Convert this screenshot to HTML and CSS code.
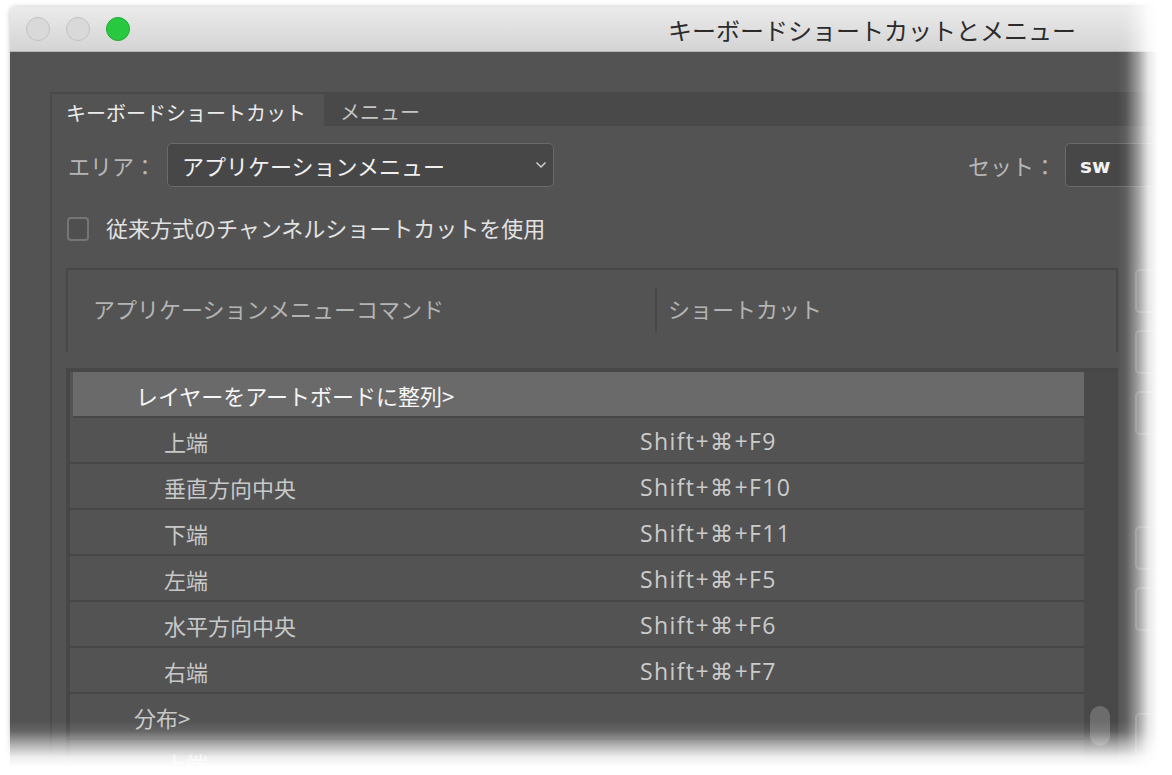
FILE: index.html
```html
<!DOCTYPE html>
<html lang="ja">
<head>
<meta charset="utf-8">
<title>キーボードショートカットとメニュー</title>
<link rel="stylesheet" href="styles.css">
</head>
<body>
<div class="window">
  <div class="titlebar">
    <div class="lights">
      <span class="light gray"></span>
      <span class="light gray"></span>
      <span class="light green"></span>
    </div>
    <div class="title">キーボードショートカットとメニュー</div>
    <div></div>
  </div>
  <div class="winbody">
    <div class="panel">
      <div class="tabs">
        <div class="tab active">キーボードショートカット</div>
        <div class="tab">メニュー</div>
      </div>
      <div class="content">
        <div class="toprow">
          <div class="field">
            <span class="label">エリア：</span>
            <div class="select area">
              <span class="select-text">アプリケーションメニュー</span>
              <svg class="chev" width="12" height="8" viewBox="0 0 12 8"><path d="M1.5 1.5 L6 6 L10.5 1.5" fill="none" stroke="#cfcfcf" stroke-width="1.5"/></svg>
            </div>
          </div>
          <div class="field setfield">
            <span class="label">セット：</span>
            <div class="select set"><span class="sw">sw</span></div>
          </div>
        </div>
        <div class="checkrow">
          <span class="checkbox"></span>
          <span class="checklabel">従来方式のチャンネルショートカットを使用</span>
        </div>
        <div class="tablearea">
          <div class="table">
            <div class="thead">
              <div class="th th1">アプリケーションメニューコマンド</div>
              <div class="thsep"></div>
              <div class="th th2">ショートカット</div>
            </div>
            <div class="list">
              <div class="rows">
                <div class="row parent sel"><span class="name">レイヤーをアートボードに整列&gt;</span><span class="key"></span></div>
                <div class="row"><span class="name">上端</span><span class="key">Shift+⌘+F9</span></div>
                <div class="row"><span class="name">垂直方向中央</span><span class="key">Shift+⌘+F10</span></div>
                <div class="row"><span class="name">下端</span><span class="key">Shift+⌘+F11</span></div>
                <div class="row"><span class="name">左端</span><span class="key">Shift+⌘+F5</span></div>
                <div class="row"><span class="name">水平方向中央</span><span class="key">Shift+⌘+F6</span></div>
                <div class="row"><span class="name">右端</span><span class="key">Shift+⌘+F7</span></div>
                <div class="row parent"><span class="name">分布&gt;</span><span class="key"></span></div>
                <div class="row"><span class="name">上端</span><span class="key"></span></div>
              </div>
              <div class="scrolltrack"><div class="thumb"></div></div>
            </div>
          </div>
          <div class="buttons">
            <div class="btn"></div>
            <div class="btn"></div>
            <div class="btn"></div>
            <div class="btn gap1"></div>
            <div class="btn"></div>
            <div class="btn gap2"></div>
          </div>
        </div>
      </div>
    </div>
  </div>
</div>
<div class="fade-right"></div>
<div class="fade-bottom"></div>
</body>
</html>
```

FILE: styles.css
```css
* { box-sizing: border-box; }
html, body { margin: 0; padding: 0; }
body {
  width: 1172px;
  height: 775px;
  overflow: hidden;
  background: #ffffff;
  position: relative;
  font-family: "Noto Sans CJK JP", "Noto Sans", sans-serif;
}
.window {
  margin: 7px 0 0 10px;
  width: 1724px;
  height: 900px;
  border-radius: 6px 6px 0 0;
  overflow: hidden;
  box-shadow: 0 0 5px rgba(0,0,0,0.25);
}
.titlebar {
  height: 45px;
  border-bottom: 1px solid #b4b4b4;
  background: linear-gradient(#ebebeb, #d4d4d4);
  display: grid;
  grid-template-columns: 1fr auto 1fr;
  align-items: center;
}
.lights {
  display: flex;
  gap: 16px;
  padding-left: 16px;
  padding-bottom: 1px;
}
.light {
  width: 24px;
  height: 24px;
  border-radius: 50%;
  display: block;
}
.light.gray { background: #d9d9d9; border: 1px solid #c2c2c2; }
.light.green { background: #28c940; border: 1px solid #1eaa30; }
.title {
  font-size: 24px;
  line-height: 24px;
  color: #2b2b2b;
  padding-top: 2px;
  white-space: nowrap;
}
.winbody {
  background: #535353;
  height: 900px;
  padding: 40px 0 0 40px;
}
.panel {
  width: 1221px;
  border-left: 2px solid #4a4a4a;
  height: 800px;
}
.tabs {
  display: flex;
  background: #494949;
  height: 34px;
}
.tab {
  font-size: 20px;
  line-height: 24px;
  color: #c4c4c4;
  padding: 8px 16px 0 16px;
  white-space: nowrap;
}
.tab.active {
  margin-top: 2px;
  width: 272px;
  background: #535353;
  color: #ececec;
  padding: 7px 0 0 14px;
}
.content {
  padding: 17px 16px 0 14px;
}
.toprow {
  display: flex;
  align-items: center;
  height: 44px;
}
.field {
  display: flex;
  align-items: center;
}
.setfield { margin-left: auto; }
.label {
  font-size: 22px;
  color: #b6b6b6;
  margin-left: 2px;
  white-space: nowrap;
}
.select {
  height: 44px;
  border: 1px solid #6a6a6a;
  border-radius: 5px;
  background: #474747;
  display: flex;
  align-items: center;
}
.select.area {
  width: 387px;
  margin-left: 11px;
  padding: 0 6px 0 14px;
  justify-content: space-between;
}
.select-text {
  font-size: 22px;
  color: #f0f0f0;
  white-space: nowrap;
}
.select.set {
  width: 190px;
  margin-left: 9px;
  padding-left: 14px;
}
.sw {
  font-family: "DejaVu Sans", "Liberation Sans", sans-serif;
  font-weight: bold;
  font-size: 20px;
  color: #f2f2f2;
  padding-top: 2px;
}
.checkrow {
  margin-top: 30px;
  display: flex;
  align-items: center;
  height: 24px;
}
.checkbox {
  width: 22px;
  height: 24px;
  margin-left: 1px;
  border: 2px solid #757575;
  border-radius: 4px;
  background: #4f4f4f;
}
.checklabel {
  font-size: 22px;
  line-height: 24px;
  color: #e2e2e2;
  margin-left: 17px;
  padding-bottom: 4px;
  white-space: nowrap;
}
.tablearea {
  margin-top: 27px;
  display: flex;
  gap: 17px;
}
.table { width: 1052px; flex: none; }
.thead {
  height: 84px;
  border: 2px solid #474747;
  border-bottom: none;
  display: flex;
  align-items: center;
  padding-bottom: 6px;
}
.th {
  font-size: 22px;
  color: #b4b4b4;
  white-space: nowrap;
}
.th1 { width: 587px; padding-left: 25px; }
.thsep { width: 2px; height: 44px; background: #474747; margin-top: 4px; }
.th2 { padding-left: 11px; }
.list {
  margin-top: 16px;
  border-top: 4px solid #474747;
  border-left: 4px solid #474747;
  border-right: 2px solid #474747;
  display: flex;
  height: 420px;
  background: #535353;
}
.rows { width: 1014px; }
.row {
  height: 46px;
  border-bottom: 2px solid #474747;
  display: grid;
  grid-template-columns: 570px 1fr;
  align-items: center;
  padding-top: 2px;
  font-size: 22px;
  color: #c8c8c8;
  white-space: nowrap;
}
.row .name { padding-left: 94px; }
.row.parent .name { padding-left: 64px; }
.row.sel {
  margin-left: 3px;
  background: #6a6a6a;
  color: #f6f6f6;
  grid-template-columns: 567px 1fr;
}
.row.sel .name { padding-left: 63px; }
.key {
  font-family: "Open Sans", "DejaVu Sans", sans-serif;
  font-size: 23px;
  letter-spacing: 1.4px;
  color: #cbcbcb;
}
.scrolltrack {
  flex: 1;
  background: repeating-conic-gradient(#4b4b4b 0 25%, #464646 0 50%) 0 0 / 2px 2px;
}
.thumb {
  width: 20px;
  height: 40px;
  border-radius: 10px;
  background: #6c6c6c;
  margin: 334px 0 0 6px;
}
.buttons {
  display: flex;
  flex-direction: column;
  gap: 17px;
  padding-top: 1px;
}
.btn {
  width: 130px;
  height: 44px;
  border: 2px solid #6e6e6e;
  border-radius: 5px;
}
.btn.gap1 { margin-top: 74px; }
.btn.gap2 { margin-top: 65px; }
.fade-right {
  position: absolute;
  top: 0;
  right: 0;
  width: 54px;
  height: 775px;
  pointer-events: none;
  background: linear-gradient(to right, rgba(255,255,255,0) 0px, rgba(255,255,255,0.08) 8px, rgba(255,255,255,0.45) 20px, rgba(255,255,255,0.85) 30px, #fff 40px);
}
.fade-bottom {
  position: absolute;
  left: 0;
  bottom: 0;
  width: 1172px;
  height: 54px;
  pointer-events: none;
  background: linear-gradient(to bottom, rgba(255,255,255,0) 0px, rgba(255,255,255,0.1) 10px, rgba(255,255,255,0.55) 24px, rgba(255,255,255,0.9) 36px, #fff 46px);
}
```
